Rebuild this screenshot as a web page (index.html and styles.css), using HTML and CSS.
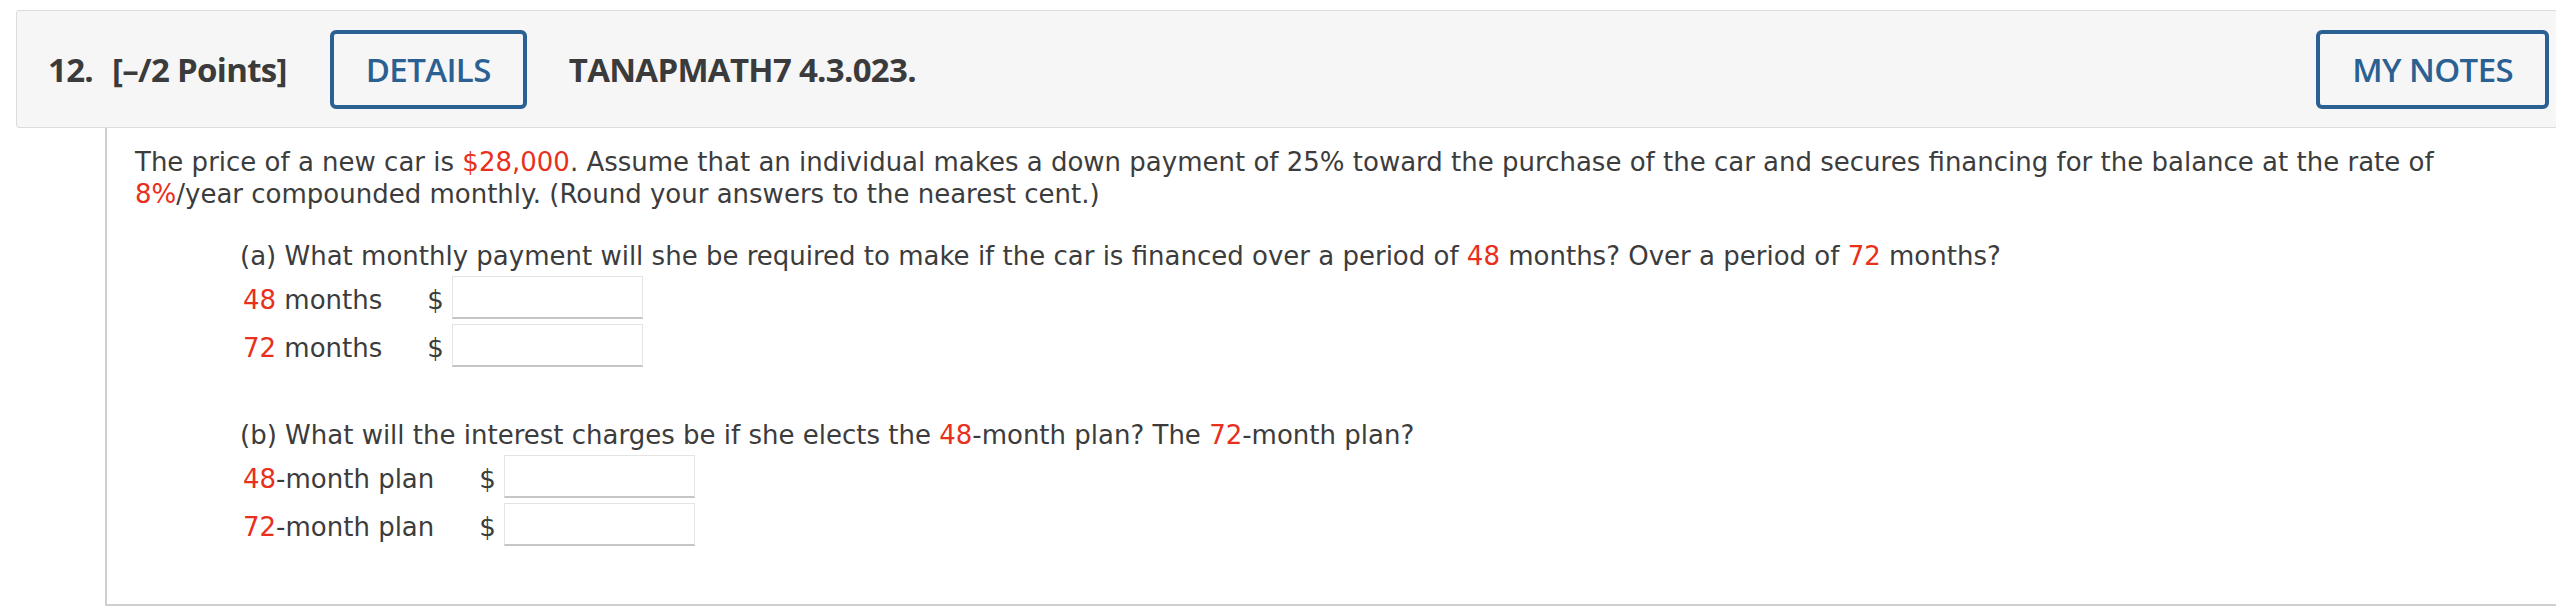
FILE: index.html
```html
<!DOCTYPE html>
<html lang="en">
<head>
<meta charset="utf-8">
<title>Question 12</title>
<link rel="stylesheet" href="styles.css">
</head>
<body>
<div class="question">
  <div class="q-header">
    <span class="q-num">12.</span>
    <span class="q-points">[–/2 Points]</span>
    <button class="q-btn">DETAILS</button>
    <span class="q-title">TANAPMATH7 4.3.023.</span>
    <button class="q-btn q-notes">MY NOTES</button>
  </div>
  <div class="q-body">
    <p class="q-text">The price of a new car is <span class="red">$28,000</span>. Assume that an individual makes a down payment of 25% toward the purchase of the car and secures financing for the balance at the rate of <span class="red">8%</span>/year compounded monthly. (Round your answers to the nearest cent.)</p>
    <div class="part">
      <p class="part-q">(a) What monthly payment will she be required to make if the car is financed over a period of <span class="red">48</span> months? Over a period of <span class="red">72</span> months?</p>
      <div class="answers">
        <span class="lbl"><span class="red">48</span> months</span><span class="cur">$</span><input class="ans" type="text">
        <span class="lbl"><span class="red">72</span> months</span><span class="cur">$</span><input class="ans" type="text">
      </div>
    </div>
    <div class="part part-b">
      <p class="part-q">(b) What will the interest charges be if she elects the <span class="red">48</span>-month plan? The <span class="red">72</span>-month plan?</p>
      <div class="answers">
        <span class="lbl"><span class="red">48</span>-month plan</span><span class="cur">$</span><input class="ans" type="text">
        <span class="lbl"><span class="red">72</span>-month plan</span><span class="cur">$</span><input class="ans" type="text">
      </div>
    </div>
  </div>
</div>
</body>
</html>
```
FILE: styles.css
```css
html, body {
  margin: 0;
  padding: 0;
  background: #ffffff;
  overflow: hidden;
}
body {
  padding: 10px 0 0 16px;
}
.question {
  margin-right: -30px;
}
.q-header {
  display: flex;
  align-items: center;
  height: 116px;
  background: #f6f6f6;
  border: 1px solid #dcdcdc;
  border-radius: 3px;
  padding: 0 36px 0 31px;
  font-family: "Open Sans", sans-serif;
  font-weight: 700;
  font-size: 33px;
  letter-spacing: -0.7px;
  color: #3b3b3b;
}
.q-num {
  margin-right: 19px;
}
.q-points {
  margin-right: 43px;
}
.q-btn {
  height: 79px;
  box-sizing: border-box;
  padding: 0 32px;
  border: 4px solid #2b6093;
  border-radius: 6px;
  background: #f6f6f6;
  color: #2b6093;
  font-family: "Open Sans", sans-serif;
  font-weight: 600;
  font-size: 33px;
  letter-spacing: -0.6px;
  line-height: 1;
}
.q-title {
  margin-left: 42px;
}
.q-notes {
  margin-left: auto;
}
.q-body {
  margin-left: 89px;
  border-left: 2px solid #cfcfcf;
  border-bottom: 2px solid #cfcfcf;
  padding: 18px 80px 56px 28px;
  font-family: "DejaVu Sans", Verdana, sans-serif;
  font-size: 26px;
  line-height: 32px;
  color: #3c3c3c;
}
.q-text {
  margin: 0;
}
.red {
  color: #e8301d;
}
.part {
  margin: 27px 0 0 105px;
}
.part-b {
  margin-top: 47px;
}
.part-q {
  margin: 0 0 1px 0;
  padding-top: 3px;
}
.answers {
  display: grid;
  grid-template-columns: max-content max-content 191px;
  grid-auto-rows: 48px;
  align-items: center;
  padding-left: 3px;
}
.lbl, .cur {
  padding-top: 6px;
}
.cur {
  padding-left: 45px;
  padding-right: 8px;
}
.ans {
  height: 43px;
  box-sizing: border-box;
  margin: 0;
  border: 1px solid #e4e4e4;
  border-bottom: 2px solid #c6c6c6;
  background: #ffffff;
  font: inherit;
}
```
